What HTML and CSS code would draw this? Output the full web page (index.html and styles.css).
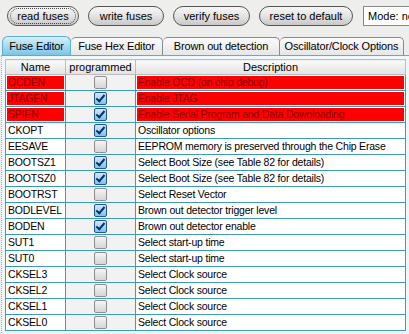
FILE: index.html
```html
<!DOCTYPE html>
<html>
<head>
<meta charset="utf-8">
<link rel="stylesheet" href="styles.css">
</head>
<body>
<div class="toolbar">
  <button class="btn focus"><span>read fuses</span></button>
  <button class="btn"><span>write fuses</span></button>
  <button class="btn"><span>verify fuses</span></button>
  <button class="btn"><span>reset to default</span></button>
  <div class="mode">Mode: no</div>
</div>
<div class="tabs">
  <div class="tab active">Fuse Editor</div>
  <div class="tab">Fuse Hex Editor</div>
  <div class="tab">Brown out detection</div>
  <div class="tab">Oscillator/Clock Options</div>
</div>
<div class="panel">
  <table class="grid">
    <colgroup><col class="c1"><col class="c2"><col class="c3"></colgroup>
    <thead>
      <tr><th>Name</th><th>programmed</th><th>Description</th></tr>
    </thead>
    <tbody>
      <tr class="warn"><td><div>OCDEN</div></td><td class="cb"><i class="box"></i></td><td><div>Enable OCD (on chip debug)</div></td></tr>
      <tr class="warn"><td><div>JTAGEN</div></td><td class="cb"><i class="box on"></i></td><td><div>Enable JTAG</div></td></tr>
      <tr class="warn"><td><div>SPIEN</div></td><td class="cb"><i class="box on"></i></td><td><div>Enable Serial Program and Data Downloading</div></td></tr>
      <tr><td><div>CKOPT</div></td><td class="cb"><i class="box on"></i></td><td><div>Oscillator options</div></td></tr>
      <tr><td><div>EESAVE</div></td><td class="cb"><i class="box"></i></td><td><div>EEPROM memory is preserved through the Chip Erase</div></td></tr>
      <tr><td><div>BOOTSZ1</div></td><td class="cb"><i class="box on"></i></td><td><div>Select Boot Size (see Table 82 for details)</div></td></tr>
      <tr><td><div>BOOTSZ0</div></td><td class="cb"><i class="box on"></i></td><td><div>Select Boot Size (see Table 82 for details)</div></td></tr>
      <tr><td><div>BOOTRST</div></td><td class="cb"><i class="box"></i></td><td><div>Select Reset Vector</div></td></tr>
      <tr><td><div>BODLEVEL</div></td><td class="cb"><i class="box on"></i></td><td><div>Brown out detector trigger level</div></td></tr>
      <tr><td><div>BODEN</div></td><td class="cb"><i class="box on"></i></td><td><div>Brown out detector enable</div></td></tr>
      <tr><td><div>SUT1</div></td><td class="cb"><i class="box"></i></td><td><div>Select start-up time</div></td></tr>
      <tr><td><div>SUT0</div></td><td class="cb"><i class="box"></i></td><td><div>Select start-up time</div></td></tr>
      <tr><td><div>CKSEL3</div></td><td class="cb"><i class="box"></i></td><td><div>Select Clock source</div></td></tr>
      <tr><td><div>CKSEL2</div></td><td class="cb"><i class="box"></i></td><td><div>Select Clock source</div></td></tr>
      <tr><td><div>CKSEL1</div></td><td class="cb"><i class="box"></i></td><td><div>Select Clock source</div></td></tr>
      <tr><td><div>CKSEL0</div></td><td class="cb"><i class="box"></i></td><td><div>Select Clock source</div></td></tr>
    </tbody>
  </table>
</div>
</body>
</html>
```
FILE: styles.css
```css
html, body {
  margin: 0;
  padding: 0;
  background: #eeeeec;
  font-family: "Liberation Sans", Arial, sans-serif;
  font-size: 11px;
  color: #000;
  width: 409px;
  height: 334px;
  overflow: hidden;
}
.toolbar {
  display: flex;
  align-items: center;
  gap: 9px;
  padding: 5px 0 0 7px;
  height: 21px;
  white-space: nowrap;
}
.btn {
  font: inherit;
  font-size: 11px;
  height: 20px;
  padding: 0 2px;
  border: 1px solid #555;
  border-radius: 10px;
  background: linear-gradient(#f6f6f6, #e4e4e4 50%, #c8c8c8);
  color: #000;
  flex: none;
}
.btn span {
  display: block;
  padding: 0 4px;
  line-height: 14px;
  border: 1px dotted transparent;
  border-radius: 8px;
}
.btn.focus span { border-color: #444; }
.btn:nth-child(1) { width: 72px; }
.btn:nth-child(2) { width: 76px; }
.btn:nth-child(3) { width: 77px; }
.btn:nth-child(4) { width: 94px; }
.mode {
  flex: none;
  margin-left: 1px;
  height: 20px;
  box-sizing: border-box;
  border: 1px solid #888;
  border-right: none;
  background: #fff;
  font-size: 11px;
  line-height: 18px;
  padding-left: 4px;
  width: 46px;
  overflow: hidden;
}
.tabs {
  display: flex;
  margin-top: 10px;
  padding-left: 2px;
  height: 19px;
  align-items: flex-end;
}
.tab {
  flex: none;
  height: 18px;
  box-sizing: border-box;
  font-size: 11px;
  letter-spacing: -0.15px;
  line-height: 17px;
  text-align: center;
  border: 1px solid #8a8a8a;
  border-bottom: none;
  border-left: none;
  border-radius: 5px 5px 0 0;
  background: linear-gradient(#fbfbfb, #e6e6e6);
  white-space: nowrap;
}
.tab.active {
  height: 19px;
  border-left: 1px solid #5aaed0;
  border-color: #5aaed0;
  border-radius: 6px 6px 0 0;
  background: linear-gradient(#d6f0fb, #9fd6ee 60%, #7cc4e4);
  line-height: 18px;
}
.tab:nth-child(1) { width: 69px; }
.tab:nth-child(2) { width: 92px; }
.tab:nth-child(3) { width: 117px; }
.tab:nth-child(4) { width: 124px; }
.panel {
  border-top: 1px solid #5aaed0;
  border-left: 1px dotted #b0b0b0;
  margin-left: 1px;
  background: #eef7fb;
  padding: 3px 0 0 3px;
  height: 274px;
  overflow: hidden;
}
.grid {
  border-collapse: collapse;
  table-layout: fixed;
  width: 400px;
  background: #fff;
}
.c1 { width: 60px; }
.c2 { width: 70px; }
.c3 { width: 270px; }
.grid th {
  height: 14px;
  padding: 0;
  font-weight: normal;
  font-size: 11px;
  line-height: 14px;
  border: 1px solid #bcbcbc;
  background: linear-gradient(#fafafa, #e2e2e2);
}
.grid td {
  height: 13px;
  padding: 1px;
  border: 1px solid #3d9cbd;
  font-size: 10.5px;
  letter-spacing: -0.2px;
  line-height: 13px;
  white-space: nowrap;
  overflow: hidden;
}
.grid td div {
  padding-left: 1px;
  height: 13px;
  overflow: hidden;
}
.grid tr.warn td div {
  background: #ff0000;
  color: #8a0000;
}
.grid td.cb {
  text-align: center;
  background: #f2f2f2;
  padding: 0;
  line-height: 0;
}
.box {
  display: inline-block;
  vertical-align: middle;
  width: 11px;
  height: 11px;
  border: 1px solid #8f8f8f;
  border-radius: 2px;
  background: linear-gradient(#f4f4f4, #d6d6d6);
  position: relative;
}
.box.on {
  border-color: #24588a;
  background: linear-gradient(#cdeafc, #7cc2ee);
}
.box.on::after {
  content: "";
  position: absolute;
  left: 3px;
  top: 0px;
  width: 3px;
  height: 7px;
  border: solid #0f2d6a;
  border-width: 0 2px 2px 0;
  transform: rotate(40deg);
}
```
